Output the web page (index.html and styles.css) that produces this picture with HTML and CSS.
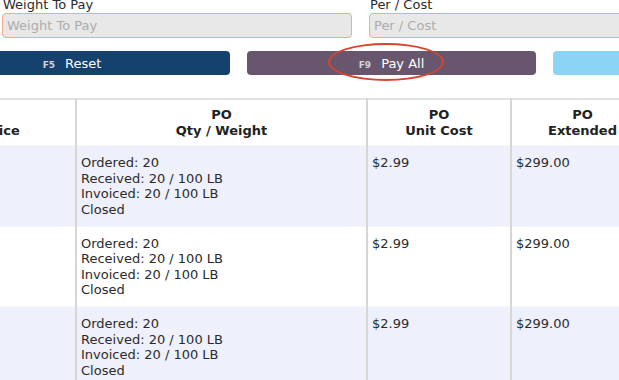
FILE: index.html
```html
<!DOCTYPE html>
<html lang="en">
<head>
  <meta charset="UTF-8">
  <meta name="viewport" content="width=device-width, initial-scale=1.0">
  <title>Invoice Payment</title>
  <link rel="stylesheet" href="styles.css">
</head>
<body>
  <div class="page">
    <div class="fields">
      <div class="field">
        <label>Weight To Pay</label>
        <input type="text" placeholder="Weight To Pay">
      </div>
      <div class="field">
        <label>Per / Cost</label>
        <input type="text" placeholder="Per / Cost">
      </div>
    </div>

    <div class="actions">
      <button class="btn btn-reset"><span class="key">F5</span>Reset</button>
      <button class="btn btn-pay"><span class="key">F9</span>Pay All</button>
      <button class="btn btn-extra"></button>
    </div>
    <div class="highlight"></div>

    <table class="lines">
      <colgroup>
        <col class="c-inv">
        <col class="c-qty">
        <col class="c-cost">
        <col class="c-ext">
        <col class="c-more">
      </colgroup>
      <thead>
        <tr>
          <th>Invoice</th>
          <th>PO<br>Qty / Weight</th>
          <th>PO<br>Unit Cost</th>
          <th>PO<br>Extended</th>
          <th></th>
        </tr>
      </thead>
      <tbody>
        <tr>
          <td></td>
          <td>Ordered: 20<br>Received: 20 / 100 LB<br>Invoiced: 20 / 100 LB<br>Closed</td>
          <td>$2.99</td>
          <td>$299.00</td>
          <td></td>
        </tr>
        <tr>
          <td></td>
          <td>Ordered: 20<br>Received: 20 / 100 LB<br>Invoiced: 20 / 100 LB<br>Closed</td>
          <td>$2.99</td>
          <td>$299.00</td>
          <td></td>
        </tr>
        <tr>
          <td></td>
          <td>Ordered: 20<br>Received: 20 / 100 LB<br>Invoiced: 20 / 100 LB<br>Closed</td>
          <td>$2.99</td>
          <td>$299.00</td>
          <td></td>
        </tr>
      </tbody>
    </table>
  </div>
</body>
</html>
```

FILE: styles.css
```css
body {
  font-family: "DejaVu Sans", Verdana, sans-serif;
  font-size: 13px;
  color: #2b2b2b;
  margin: 0;
  padding: 0;
  overflow: hidden;
  background-color: #fff;
}
.page {
  position: relative;
  margin-top: -3px;
}
.fields {
  display: flex;
  gap: 17px;
  padding-left: 2px;
}
.field {
  display: flex;
  flex-direction: column;
  width: 350px;
  flex-shrink: 0;
}
.field label {
  line-height: 16px;
  padding-left: 1px;
}
.field input {
  height: 25px;
  box-sizing: border-box;
  border: 1px solid #f2aa8c;
  border-radius: 4px;
  background-color: #e8e8e8;
  font-family: inherit;
  font-size: 13px;
  padding: 0 4px;
}
.field input::placeholder {
  color: #acacac;
}
.actions {
  display: flex;
  gap: 17px;
  margin-top: 13px;
  margin-left: -86px;
}
.btn {
  height: 24px;
  border: none;
  border-radius: 4px;
  color: #fff;
  font-family: inherit;
  font-size: 13px;
  flex-shrink: 0;
  width: 289px;
  padding: 0;
}
.btn-reset {
  width: 316px;
  background-color: #15416f;
}
.btn-pay {
  background-color: #67566d;
}
.btn-extra {
  background-color: #8bd4f5;
}
.key {
  font-size: 9px;
  font-weight: bold;
  color: #d4d4dc;
  margin-right: 10px;
}
.highlight {
  position: absolute;
  left: 328px;
  top: 46px;
  width: 112px;
  height: 34px;
  border: 2px solid #d6452c;
  border-radius: 50%;
}
.lines {
  margin-top: 23px;
  margin-left: -88px;
  border-collapse: collapse;
  table-layout: fixed;
  width: 760px;
  border-top: 2px solid #e2e2e2;
}
.c-inv { width: 164px; }
.c-qty { width: 291px; }
.c-cost { width: 144px; }
.c-ext { width: 143px; }
.c-more { width: 18px; }
th, td {
  line-height: 15.6px;
  border-left: 2px solid #d6d6d6;
  vertical-align: top;
  text-align: left;
}
th:first-child, td:first-child {
  border-left: none;
}
th {
  font-weight: bold;
  color: #222;
  text-align: center;
  vertical-align: bottom;
  padding: 7px 5px;
}
td {
  padding: 9px 4px 8px;
  border-top: 1px solid #f6f7fd;
}
tbody tr:nth-child(odd) td {
  background-color: #eef0fc;
}
```
